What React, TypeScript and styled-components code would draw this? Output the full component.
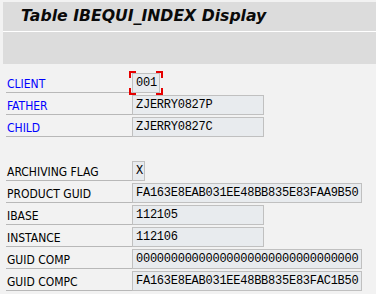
import React from 'react';
import styled, { createGlobalStyle } from 'styled-components';

const GlobalStyle = createGlobalStyle`
  html, body {
    margin: 0;
    padding: 0;
    background: #f2f2f2;
  }
  body {
    font-family: "DejaVu Sans", Verdana, sans-serif;
  }
`;

const Screen = styled.div`
  width: 376px;
  height: 294px;
  overflow: hidden;
  background: #f2f2f2;
`;

const Header = styled.div`
  padding: 2px 0 0 3px;
`;

const TitleBar = styled.div`
  height: 30px;
  box-sizing: border-box;
  padding: 5px 0 0 18px;
  background: #dcdcdc;
  border-bottom: 1px solid #ffffff;
  font-family: "DejaVu Sans", Verdana, sans-serif;
  font-weight: bold;
  font-style: italic;
  font-size: 15.7px;
  line-height: 18px;
  color: #0a0a0a;
  white-space: nowrap;
`;

const Toolbar = styled.div`
  height: 32px;
  background: #dcdcdc;
`;

const Form = styled.div`
  padding: 7px 0 0 6px;
`;

const Row = styled.div`
  display: flex;
  height: 22px;
`;

const Spacer = styled.div`
  height: 22px;
`;

const Label = styled.div<{ $link?: boolean }>`
  width: 126px;
  height: 22px;
  box-sizing: border-box;
  display: flex;
  align-items: flex-end;
  padding: 0 0 1px 1px;
  border-bottom: 1px solid #b8b8b8;
  font-family: "DejaVu Sans Condensed", "DejaVu Sans", sans-serif;
  font-stretch: condensed;
  font-size: 12px;
  line-height: 14px;
  color: ${p => (p.$link ? '#0000ff' : '#000000')};
  white-space: nowrap;
`;

const FieldWrap = styled.div`
  position: relative;
  margin-top: 2px;
  height: 20px;
`;

const Field = styled.div<{ $w: number }>`
  width: ${p => p.$w}px;
  height: 20px;
  box-sizing: border-box;
  padding: 0 0 0 3px;
  background: #e8ebee;
  border: 1px solid #c0c0c0;
  font-family: "Liberation Mono", "Courier New", monospace;
  font-size: 12px;
  letter-spacing: -0.25px;
  line-height: 18px;
  color: #000000;
  white-space: nowrap;
  overflow: hidden;
`;

const Corner = styled.span<{ $pos: 'tl' | 'tr' | 'bl' | 'br' }>`
  position: absolute;
  width: 5px;
  height: 5px;
  border-color: #e60000;
  border-style: solid;
  border-width: ${p =>
    p.$pos === 'tl' ? '2px 0 0 2px' :
    p.$pos === 'tr' ? '2px 2px 0 0' :
    p.$pos === 'bl' ? '0 0 2px 2px' : '0 2px 2px 0'};
  ${p => (p.$pos[0] === 't' ? 'top: -2px;' : 'bottom: -2px;')}
  ${p => (p.$pos[1] === 'l' ? 'left: -3px;' : 'right: -3px;')}
`;

interface Entry {
  label: string;
  value: string;
  width: number;
  link?: boolean;
  focus?: boolean;
}

const keys: Entry[] = [
  { label: 'CLIENT', value: '001', width: 28, link: true, focus: true },
  { label: 'FATHER', value: 'ZJERRY0827P', width: 132, link: true },
  { label: 'CHILD', value: 'ZJERRY0827C', width: 132, link: true },
];

const fields: Entry[] = [
  { label: 'ARCHIVING FLAG', value: 'X', width: 13 },
  { label: 'PRODUCT GUID', value: 'FA163E8EAB031EE48BB835E83FAA9B50', width: 230 },
  { label: 'IBASE', value: '112105', width: 132 },
  { label: 'INSTANCE', value: '112106', width: 132 },
  { label: 'GUID COMP', value: '00000000000000000000000000000000', width: 230 },
  { label: 'GUID COMPC', value: 'FA163E8EAB031EE48BB835E83FAC1B50', width: 230 },
];

const FormRow: React.FC<{ entry: Entry }> = ({ entry }) => (
  <Row>
    <Label $link={entry.link}>{entry.label}</Label>
    <FieldWrap>
      <Field $w={entry.width}>{entry.value}</Field>
      {entry.focus && (
        <>
          <Corner $pos="tl" />
          <Corner $pos="tr" />
          <Corner $pos="bl" />
          <Corner $pos="br" />
        </>
      )}
    </FieldWrap>
  </Row>
);

export default function App() {
  return (
    <Screen>
      <GlobalStyle />
      <Header>
        <TitleBar>Table IBEQUI_INDEX Display</TitleBar>
        <Toolbar />
      </Header>
      <Form>
        {keys.map(e => <FormRow key={e.label} entry={e} />)}
        <Spacer />
        {fields.map(e => <FormRow key={e.label} entry={e} />)}
      </Form>
    </Screen>
  );
}
